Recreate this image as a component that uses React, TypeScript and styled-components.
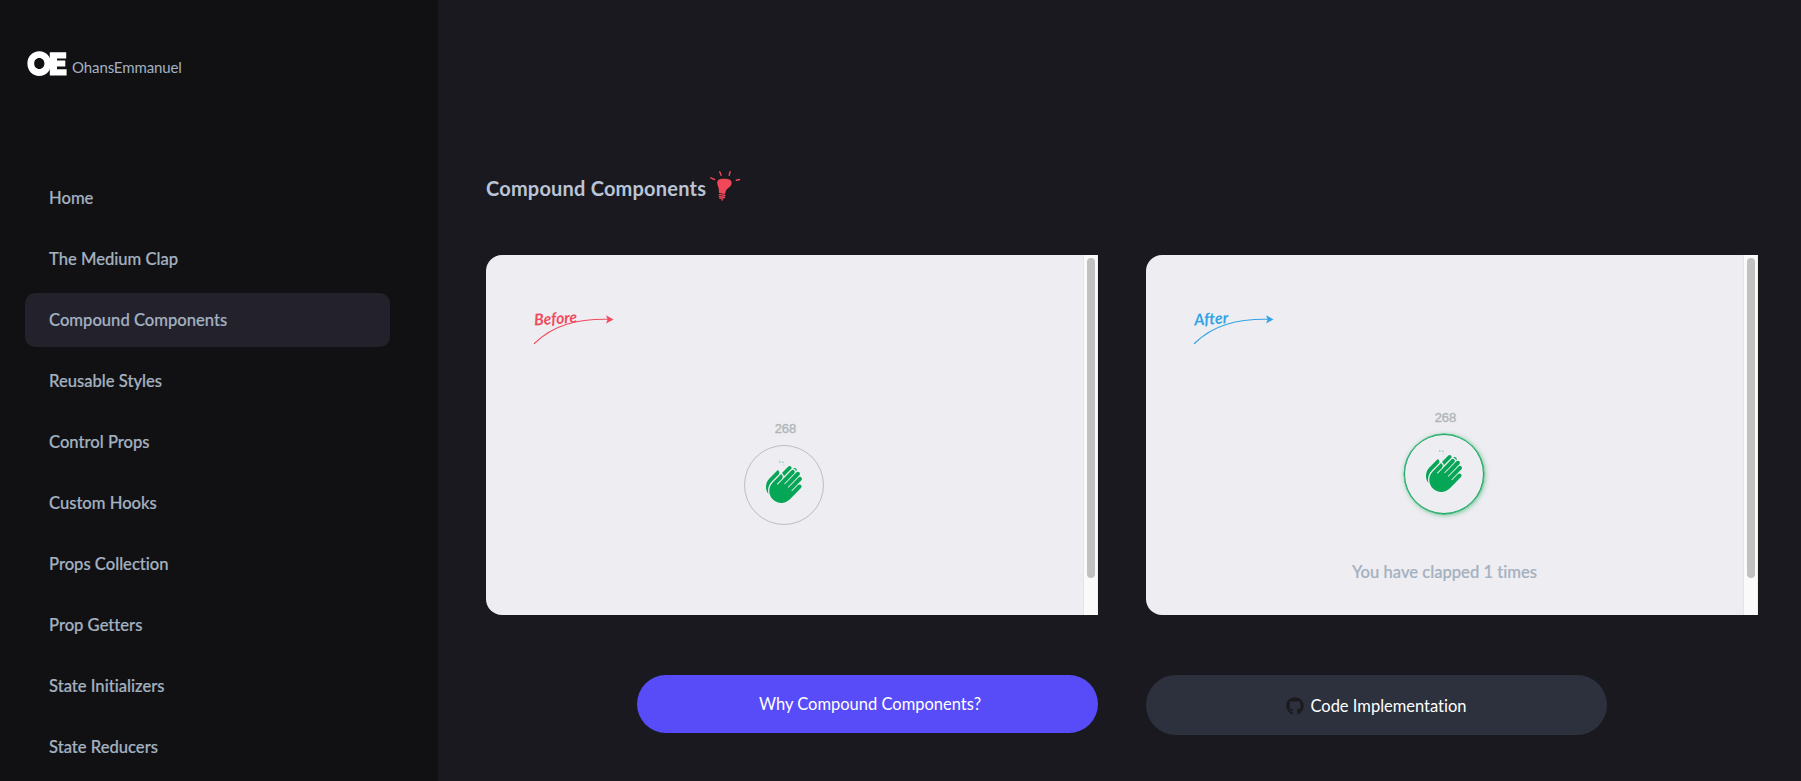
import React from "react";
import styled, { createGlobalStyle, css } from "styled-components";
import { FaGithub } from "react-icons/fa";

const Global = createGlobalStyle`
  * { box-sizing: border-box; }
  html, body { margin: 0; background: #1a191f; overflow: hidden; }
  body {
    font-family: Lato, "Liberation Sans", sans-serif;
    font-variant-ligatures: none;
    color: #a4b1c0;
  }
`;

const Page = styled.div`
  display: flex;
  height: 781px;
  overflow: hidden;
`;

const Sidebar = styled.aside`
  width: 438px;
  flex: none;
  background: #111113;
  padding: 50px 48px 0 25px;
`;

const Brand = styled.div`
  display: flex;
  height: 121px;
  padding-left: 2px;
  gap: 5px;
`;

const BrandName = styled.span`
  font-size: 15px;
  line-height: 20px;
  padding-top: 7px;
  letter-spacing: -0.1px;
  white-space: nowrap;
`;

const Nav = styled.nav`
  display: flex;
  flex-direction: column;
  gap: 7px;
`;

const NavItem = styled.a<{ $active?: boolean }>`
  height: 54px;
  flex: none;
  line-height: 55px;
  padding-left: 24px;
  border-radius: 10px;
  font-size: 16.6px;
  font-weight: 500;
  -webkit-text-stroke: 0.2px #a4b1c0;
  white-space: nowrap;
  ${(p) => p.$active && css`background: #22212c;`}
`;

const Main = styled.main`
  flex: 1;
  padding: 170px 43px 0 48px;
`;

const Heading = styled.h1`
  display: flex;
  height: 85px;
  margin: 0;
  font-size: 20px;
  line-height: 37px;
  font-weight: 700;
  color: #b9c4d6;
  letter-spacing: 0.2px;
  white-space: nowrap;
`;

const HeadingText = styled.span`
  width: 224px;
`;

const Columns = styled.div`
  display: grid;
  grid-template-columns: 612px 612px;
  column-gap: 48px;
`;

const Panel = styled.section`
  display: flex;
  height: 360px;
  background: #eeedf2;
  border-radius: 16px 0 0 16px;
  overflow: hidden;
`;

const PanelBody = styled.div`
  flex: 1;
  display: flex;
  flex-direction: column;
  align-items: center;
  padding-top: 50px;
`;

const Arrow = styled.svg`
  align-self: flex-start;
  margin-left: 46px;
  flex: none;
`;

const Track = styled.div`
  width: 15px;
  background: #fafafa;
  border-left: 1px solid #e4e4e6;
  border-right: 1px solid #efefef;
  padding: 3px 2px 0 3px;
`;

const Thumb = styled.div`
  width: 8px;
  height: 320px;
  border-radius: 4px;
  background: #c1c1c1;
`;

const Total = styled.span<{ $offset: number }>`
  margin-top: ${(p) => p.$offset}px;
  height: 16px;
  padding-left: 2px;
  font: 13px/16px "Liberation Sans", Arial, sans-serif;
  color: #afb6b9;
  -webkit-text-stroke: 0.4px #afb6b9;
`;

const ClapButton = styled.div<{ $glow?: boolean }>`
  width: 80px;
  height: 80px;
  margin: 8px 1px 0 0;
  padding-bottom: 4px;
  display: flex;
  align-items: center;
  justify-content: center;
  flex: none;
  border-radius: 50%;
  border: 1px solid #b8bec2;
  ${(p) => p.$glow && css`
    border-color: #10a75c;
    box-shadow: 0 0 0 0.4px #10a75c, 1px 1px 5px rgba(39, 174, 96, 0.7);
  `}
`;

const Info = styled.p`
  margin: 46px 0 0;
  font-size: 16.6px;
  line-height: 24px;
  font-weight: 500;
  color: #a4b1c0;
  -webkit-text-stroke: 0.2px #a4b1c0;
  white-space: nowrap;
`;

const Actions = styled(Columns)`
  margin-top: 60px;
  align-items: start;
`;

const Action = styled.button<{ $primary?: boolean }>`
  display: flex;
  align-items: center;
  justify-content: center;
  gap: 6px;
  width: 461px;
  height: ${(p) => (p.$primary ? 58 : 60)}px;
  justify-self: ${(p) => (p.$primary ? "end" : "start")};
  border: 0;
  padding: ${(p) => (p.$primary ? "0 0 0 5px" : "1px 0 0")};
  border-radius: 30px;
  background: ${(p) => (p.$primary ? "#584cf8" : "#2d303d")};
  color: #fff;
  font-family: Lato, "Liberation Sans", sans-serif;
  font-size: 16.5px;
  font-variant-ligatures: none;
  white-space: nowrap;
`;

const ClapIcon = () => (
  <svg width="40" height="50" viewBox="-549 338 100.1 125" fill="#06a657">
    <path d="M-471.2 366.8c1.2 1.1 1.9 2.6 2.3 4.1.4-.3.8-.5 1.2-.7 1-1.9.7-4.3-1-5.9-2-1.9-5.2-1.9-7.2.1l-.2.2c1.8.1 3.6.9 4.9 2.2zm-28.8 14c.4.9.7 1.9.8 3.1l16.5-16.9c.6-.6 1.4-1.1 2.1-1.5 1-1.9.7-4.4-.9-6-2-1.9-5.2-1.9-7.2.1l-15.5 15.9c2.3 2.2 3.1 3 4.2 5.3zm-38.9 39.7c-.1-8.9 3.2-17.2 9.4-23.6l18.6-19c.7-2 .5-4.1-.1-5.3-.8-1.8-1.3-2.3-3.6-4.5l-20.9 21.4c-10.6 10.8-11.2 27.6-2.3 39.3-.6-2.6-1-5.4-1.1-8.3z" />
    <path d="M-527.2 399.1l20.9-21.4c2.2 2.2 2.7 2.6 3.5 4.5.8 1.8 1 5.4-1.6 8l-11.8 12.2c-.5.5-.4 1.2 0 1.7.5.5 1.2.5 1.7 0l34-35c1.9-2 5.2-2.1 7.2-.1 2 1.9 2 5.2.1 7.2l-24.7 25.3c-.5.5-.4 1.2 0 1.7.5.5 1.2.5 1.7 0l28.5-29.3c2-2 5.2-2 7.1-.1 2 1.9 2 5.1.1 7.1l-28.5 29.3c-.5.5-.4 1.2 0 1.7.5.5 1.2.4 1.7 0l24.7-25.3c1.9-2 5.1-2.1 7.1-.1 2 1.9 2 5.2.1 7.2l-24.7 25.3c-.5.5-.4 1.2 0 1.7.5.5 1.2.5 1.7 0l14.6-15c2-2 5.2-2 7.2-.1 2 2 2.1 5.2.1 7.2l-27.6 28.4c-11.6 11.9-30.6 12.2-42.5.6-12-11.7-12.2-30.8-.6-42.7" />
    <path d="M-511 347.500l3 .8M-503 347l2.500 3M-500.500 355l1 1" fill="none" stroke="#06a657" strokeWidth="2" />
  </svg>
);

const Logo = () => (
  <svg width="40" height="27" viewBox="0 0 40 27" fill="#fff">
    <path fillRule="evenodd" d="M12.3 1.200C19 1.200 24 6.200 24 13.500S19 26 12.300 26 .4 20.800 .4 13.500 5.600 1.200 12.300 1.200zm0 6.900c-3 0-5.100 2.300-5.100 5.500s2.100 5.500 5.100 5.500 5.100-2.300 5.100-5.500-2.100-5.500-5.100-5.500z" />
    <path d="M22.800 2.200H39.200V8.600H30V10.600H38.300V16.400H30V19.200H39.600V25.600H22.800z" />
  </svg>
);

const Bulb = () => (
  <svg width="32" height="32" viewBox="0 0 32 32" fill="#f04858">
    <path d="M7.300 13.500C6.600 9.600 10 8.500 14.500 8.700c4 0 7.700.9 7.100 4.800-.6 3.800-4.600 4.700-5.700 7.300l-.7 2.100H9l-.2-3.200c-.1-2.400-1.200-3.700-1.500-6.200z" />
    <g fill="none" stroke="#f04858" strokeWidth="1.400" strokeLinecap="round">
      <path d="M9.200 24.600l5.400-1M9.300 26.600l5.500-1.100M10 28.300l4.500-.8M12 29.900l.5-.1M.8 7.800l3.700 1.700M9.700 1.800l1.400 3.500M20.100 1.800l-.9 3.400M26.300 10.300l3.200-.8" />
    </g>
  </svg>
);

const Annotation = ({ label, color, width }: { label: string; color: string; width: number }) => (
  <Arrow width="90" height="44" viewBox="0 0 90 44">
    <text
      transform="rotate(-4 3 20)"
      x="2.500"
      y="20.500"
      fill={color}
      fontFamily="Lato, sans-serif"
      fontStyle="italic"
      fontWeight="700"
      fontSize="16"
      textLength={width}
      lengthAdjust="spacingAndGlyphs"
    >
      {label}
    </text>
    <path d="M2.400 38.500C21 20 45 13.500 78 14.300" fill="none" stroke={color} strokeWidth="1.100" strokeLinecap="round" />
    <path d="M74 10.300L81.500 14.400 74 18.500 75.700 14.400z" fill={color} />
  </Arrow>
);

const items = [
  { label: "Home" },
  { label: "The Medium Clap" },
  { label: "Compound Components", active: true },
  { label: "Reusable Styles" },
  { label: "Control Props" },
  { label: "Custom Hooks" },
  { label: "Props Collection" },
  { label: "Prop Getters" },
  { label: "State Initializers" },
  { label: "State Reducers" },
];

export default function App() {
  return (
    <Page>
      <Global />
      <Sidebar>
        <Brand>
          <Logo />
          <BrandName>OhansEmmanuel</BrandName>
        </Brand>
        <Nav>
          {items.map((i) => (
            <NavItem key={i.label} $active={i.active}>{i.label}</NavItem>
          ))}
        </Nav>
      </Sidebar>
      <Main>
        <Heading>
          <HeadingText>Compound Components</HeadingText>
          <Bulb />
        </Heading>
        <Columns>
          <Panel>
            <PanelBody>
              <Annotation label="Before" color="#ef4b5c" width={43} />
              <Total $offset={72}>268</Total>
              <ClapButton><ClapIcon /></ClapButton>
            </PanelBody>
            <Track><Thumb /></Track>
          </Panel>
          <Panel>
            <PanelBody>
              <Annotation label="After" color="#33a3e6" width={34} />
              <Total $offset={61}>268</Total>
              <ClapButton $glow><ClapIcon /></ClapButton>
              <Info>You have clapped 1 times</Info>
            </PanelBody>
            <Track><Thumb /></Track>
          </Panel>
        </Columns>
        <Actions>
          <Action $primary>Why Compound Components?</Action>
          <Action><FaGithub size={18} color="#1b1b1d" />Code Implementation</Action>
        </Actions>
      </Main>
    </Page>
  );
}
